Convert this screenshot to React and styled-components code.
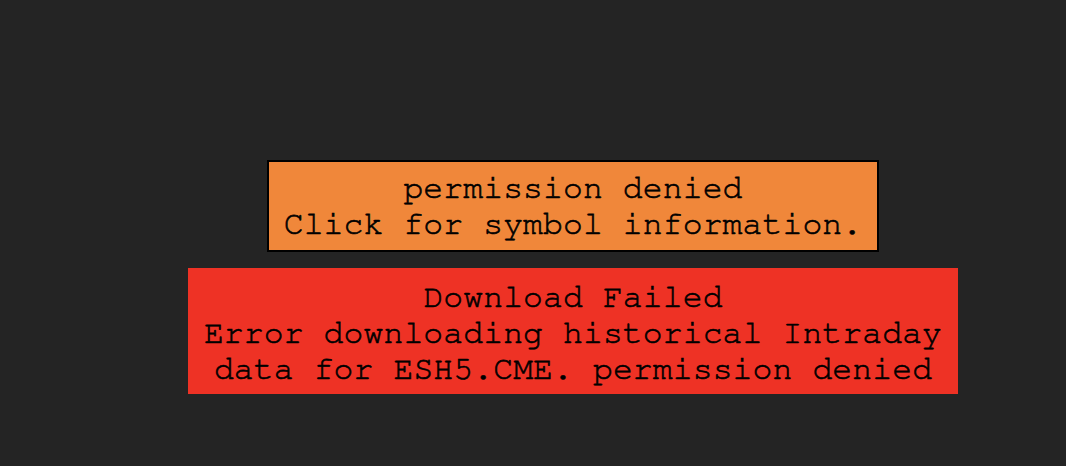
import styled, { createGlobalStyle } from 'styled-components'

const GlobalStyle = createGlobalStyle`
    html, body {
        margin: 0;
        padding: 0;
        background-color: #242424;
        height: 100%;
    }
`;

const Stage = styled.div`
    box-sizing: border-box;
    width: 100vw;
    height: 100vh;
    padding: 160px 0 0 80px;
    display: flex;
    flex-direction: column;
    align-items: center;
    gap: 16px;
`;

const Banner = styled.div`
    box-sizing: border-box;
    width: ${p => p.$width}px;
    padding: ${p => p.$pad};
    background-color: ${p => p.$bg};
    border: ${p => p.$bordered ? '2px solid #000' : 'none'};
    color: #000;
    font-family: "Nimbus Mono PS", "FreeMono", "Liberation Mono", "Courier New", monospace;
    font-size: 33px;
    line-height: 36px;
    letter-spacing: 0.15px;
    text-align: center;
    white-space: pre;
    -webkit-text-stroke: 0.6px #000;
    cursor: ${p => p.$clickable ? 'pointer' : 'default'};
`;

export default function App() {
    return (
        <>
            <GlobalStyle/>
            <Stage>
                <Banner $width={612} $pad="9px 0 7px" $bg="#f0873a" $bordered $clickable>
                    {'permission denied\nClick for symbol information.'}
                </Banner>
                <Banner $width={770} $pad="12px 0 6px" $bg="#ee3225">
                    {'Download Failed\nError downloading historical Intraday\ndata for ESH5.CME. permission denied'}
                </Banner>
            </Stage>
        </>
    )
}
